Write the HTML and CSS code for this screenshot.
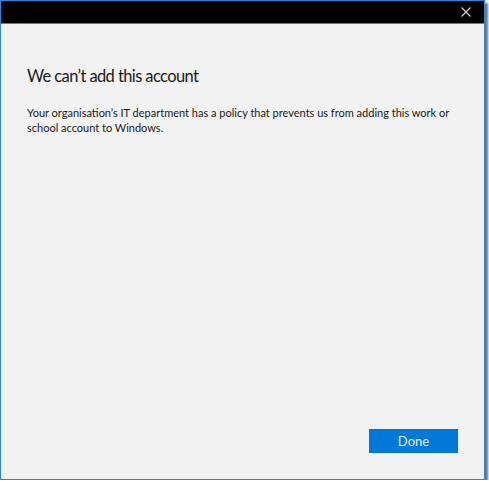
FILE: index.html
```
<!DOCTYPE html>
<html lang="en">
<head>
	<meta charset="UTF-8">
	<meta name="viewport" content="width=device-width, initial-scale=1.0">
	<title>We can't add this account</title>
	<link rel="stylesheet" href="styles.css">
</head>
<body>
	<div class="window">
		<div class="titlebar">
			<button class="close" aria-label="Close">
				<svg width="10" height="10" viewBox="0 0 10 10"><path d="M0.5 0.5L9.5 9.5M9.5 0.5L0.5 9.5" stroke="#d8d8d8" stroke-width="1.1"/></svg>
			</button>
		</div>
		<div class="content">
			<h1>We can’t add this account</h1>
			<p>Your organisation’s IT department has a policy that prevents us from adding this work or school account to Windows.</p>
			<div class="actions">
				<button class="done">Done</button>
			</div>
		</div>
	</div>
</body>
</html>
```

FILE: styles.css
```
html,body,div,h1,p{
	margin: 0; padding: 0;
}
body{
	background: #fff;
	font-family: "Segoe UI", Lato, "Open Sans", sans-serif;
}
.window{
	width: 485px; height: 480px;
	box-sizing: border-box;
	border: 1px solid #2b88d8;
	background: #f2f2f2;
	box-shadow: 3px 3px 2px rgba(0,0,0,.55);
	display: flex; flex-direction: column;
}
.titlebar{
	height: 22px;
	background: #000;
	border-bottom: 1px solid #777;
	display: flex; justify-content: flex-end; align-items: center;
	padding-right: 12px;
}
.close{
	background: none; border: 0; padding: 0;
	width: 12px; height: 12px;
	display: flex; align-items: center; justify-content: center;
}
.content{
	flex: 1;
	display: flex; flex-direction: column;
	padding: 40px 26px 26px;
	color: #1a1a1a;
}
h1{
	font-size: 16.5px; font-weight: 400;
	letter-spacing: -0.6px;
	line-height: 24px;
}
p{
	margin-top: 17px;
	font-size: 11px;
	line-height: 15px;
}
.actions{
	margin-top: auto;
	display: flex; justify-content: flex-end;
}
.done{
	width: 89px; height: 24px;
	background: #0078d7;
	border: 0;
	color: #e8f0f8;
	font-family: inherit; font-size: 13px;
}
```
